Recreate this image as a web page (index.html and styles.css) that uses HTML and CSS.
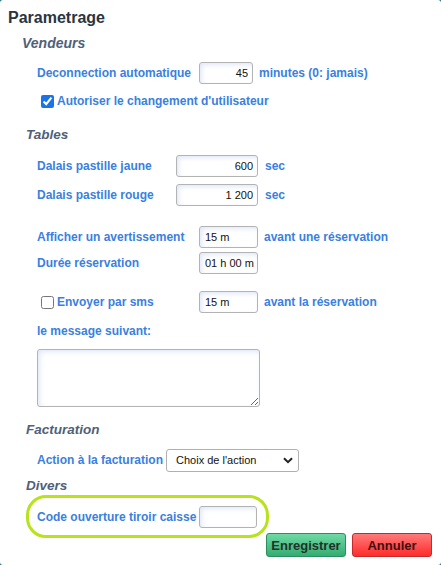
FILE: index.html
```html
<!DOCTYPE html>
<html lang="fr">
<head>
<meta charset="utf-8">
<title>Parametrage</title>
<link rel="stylesheet" href="styles.css">
</head>
<body>
<div class="dialog">
  <h1 class="title">Parametrage</h1>

  <h2 class="section section-first">Vendeurs</h2>
  <div class="row row-r1">
    <label class="lbl">Deconnection automatique</label>
    <input class="field w54" type="text" value="45">
    <span class="lbl after">minutes (0: jamais)</span>
  </div>
  <div class="row row-chk1">
    <input class="chk" type="checkbox" checked>
    <label class="lbl">Autoriser le changement d'utilisateur</label>
  </div>

  <h2 class="section section-tables">Tables</h2>
  <div class="row row-jaune">
    <label class="lbl lw139">Dalais pastille jaune</label>
    <input class="field w82" type="text" value="600">
    <span class="lbl after2">sec</span>
  </div>
  <div class="row row-rouge">
    <label class="lbl lw139">Dalais pastille rouge</label>
    <input class="field w82" type="text" value="1 200">
    <span class="lbl after2">sec</span>
  </div>
  <div class="row row-avert">
    <label class="lbl lw162">Afficher un avertissement</label>
    <input class="field w59 left" type="text" value="15 m">
    <span class="lbl after">avant une réservation</span>
  </div>
  <div class="row row-duree">
    <label class="lbl lw162">Durée réservation</label>
    <input class="field w59 left tight" type="text" value="01 h 00 m">
  </div>
  <div class="row row-sms">
    <input class="chk" type="checkbox">
    <label class="lbl lw142">Envoyer par sms</label>
    <input class="field w59 left" type="text" value="15 m">
    <span class="lbl after">avant la réservation</span>
  </div>
  <div class="row row-msg">
    <label class="lbl">le message suivant:</label>
  </div>
  <textarea class="msg"></textarea>

  <h2 class="section section-fact">Facturation</h2>
  <div class="row row-action">
    <label class="lbl">Action à la facturation</label>
    <select class="choice">
      <option>Choix de l'action</option>
    </select>
  </div>

  <h2 class="section section-divers">Divers</h2>
  <div class="highlight">
    <label class="lbl">Code ouverture tiroir caisse</label>
    <input class="field w58 left" type="text" value="">
  </div>

  <div class="actions">
    <button class="btn btn-save" type="button">Enregistrer</button>
    <button class="btn btn-cancel" type="button">Annuler</button>
  </div>
</div>
</body>
</html>
```

FILE: styles.css
```css
html, body {
  margin: 0;
  padding: 0;
}
body {
  background: #1f6e78;
  width: 441px;
  height: 565px;
  overflow: hidden;
  font-family: "Liberation Sans", Arial, sans-serif;
}
.dialog {
  box-sizing: border-box;
  width: 441px;
  height: 565px;
  background: #ffffff;
  border-radius: 3px;
  padding: 8px 9px 0 0;
  display: flex;
  flex-direction: column;
}
.title {
  margin: 0 0 0 8px;
  font-size: 16px;
  line-height: 20px;
  height: 20px;
  font-weight: bold;
  color: #2b3441;
}
.section {
  margin: 0 0 0 26px;
  font-size: 13.5px;
  line-height: 18px;
  height: 18px;
  font-weight: bold;
  font-style: italic;
  color: #4f6079;
}
.section-first { margin-top: 6px; margin-left: 22px; font-size: 14px; }
.section-tables { margin-top: 17px; }
.section-fact { margin-top: 14px; }
.section-divers { margin-top: 6px; }

.row {
  display: flex;
  align-items: center;
  height: 22px;
  margin-left: 37px;
}
.row-r1 { margin-top: 10px; }
.row-chk1 { margin-top: 9px; height: 16px; }
.row-jaune { margin-top: 11px; }
.row-rouge { margin-top: 7px; }
.row-avert { margin-top: 20px; }
.row-duree { margin-top: 4px; }
.row-sms { margin-top: 17px; }
.row-msg { margin-top: 10px; height: 16px; }
.row-action { margin-top: 10px; }

.lbl {
  font-size: 12px;
  font-weight: bold;
  color: #3a80e0;
  white-space: nowrap;
}
.row-r1 .lbl:first-child { margin-right: 8px; }
.row-action .lbl { margin-right: 3px; }
.lw139 { width: 139px; }
.lw162 { width: 162px; }
.lw142 { width: 142px; }
.after { margin-left: 6px; }
.after2 { margin-left: 7px; }

.chk {
  margin: 0 3px 0 4px;
  width: 13px;
  height: 13px;
  accent-color: #1a73e8;
}

.field {
  box-sizing: border-box;
  height: 22px;
  border: 1px solid #b3b3b3;
  border-radius: 3px;
  padding: 0 4px;
  font-family: "Liberation Sans", Arial, sans-serif;
  font-size: 11px;
  color: #111;
  text-align: right;
  background: #fff;
  box-shadow: inset 2px 2px 4px rgba(190, 205, 240, 0.45);
  outline: none;
}
.field.left { text-align: left; padding-left: 5px; }
.field.tight { padding: 0 3px 0 5px; }
.w54 { width: 54px; }
.w82 { width: 82px; }
.w59 { width: 59px; }
.w58 { width: 58px; }

.msg {
  box-sizing: border-box;
  display: block;
  width: 223px;
  height: 58px;
  margin: 10px 0 0 37px;
  border: 1px solid #b3b3b3;
  border-radius: 3px;
  box-shadow: inset 2px 2px 5px rgba(190, 205, 240, 0.45);
  resize: both;
  outline: none;
}

.choice {
  box-sizing: border-box;
  width: 133px;
  height: 23px;
  border: 1px solid #b0b0b0;
  border-radius: 3px;
  padding: 0 0 0 9px;
  font-family: "Liberation Sans", Arial, sans-serif;
  font-size: 11px;
  color: #111;
  -webkit-appearance: none;
  appearance: none;
  background: #fff url("data:image/svg+xml;utf8,<svg xmlns='http://www.w3.org/2000/svg' width='10' height='7' viewBox='0 0 10 7'><path d='M1 1.2 L5 5.2 L9 1.2' fill='none' stroke='%23222' stroke-width='2'/></svg>") no-repeat right 5px center;
  outline: none;
}

.highlight {
  box-sizing: border-box;
  display: flex;
  align-items: center;
  width: 243px;
  height: 43px;
  margin-left: 26px;
  padding-left: 8px;
  border: 3px solid #b8e21c;
  border-radius: 20px;
}
.highlight .lbl { margin-right: 3px; }

.actions {
  display: flex;
  justify-content: flex-end;
  gap: 6px;
  margin-top: -5px;
}
.btn {
  box-sizing: border-box;
  width: 80px;
  height: 24px;
  border-radius: 3px;
  font-family: "Liberation Sans", Arial, sans-serif;
  font-size: 13px;
  font-weight: bold;
  padding: 0;
  cursor: pointer;
}
.btn-save {
  border: 1px solid #2a8e5e;
  background: linear-gradient(#6fd9a4, #34ac72);
  color: #1f3329;
}
.btn-cancel {
  border: 1px solid #c42a2a;
  background: linear-gradient(#ff7a7a, #ff2c2c);
  color: #3e1010;
}
```
